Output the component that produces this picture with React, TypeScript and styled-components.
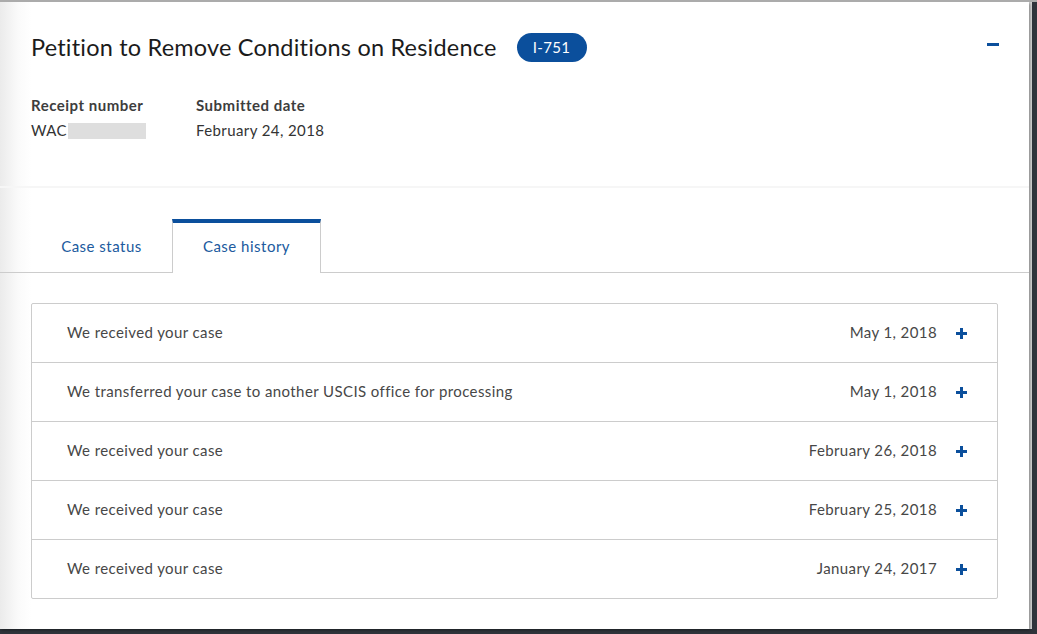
import React from 'react';
import styled, { createGlobalStyle } from 'styled-components';

const GlobalStyle = createGlobalStyle`
  html, body {
    margin: 0;
    padding: 0;
    background: #2f343b;
    font-family: 'Lato', 'Helvetica Neue', Arial, sans-serif;
  }
  * { box-sizing: border-box; }
`;

type HistoryItem = {
  text: string;
  date: string;
};

const history: HistoryItem[] = [
  { text: 'We received your case', date: 'May 1, 2018' },
  { text: 'We transferred your case to another USCIS office for processing', date: 'May 1, 2018' },
  { text: 'We received your case', date: 'February 26, 2018' },
  { text: 'We received your case', date: 'February 25, 2018' },
  { text: 'We received your case', date: 'January 24, 2017' },
];

export default function App() {
  return (
    <>
      <GlobalStyle />
      <Page>
        <Card>
          <Header>
            <TitleRow>
              <Title>Petition to Remove Conditions on Residence</Title>
              <FormBadge>I-751</FormBadge>
              <Collapse aria-label="collapse">
                <svg width="12" height="3" viewBox="0 0 12 3">
                  <rect width="12" height="3" fill="#0b4f9c" />
                </svg>
              </Collapse>
            </TitleRow>
            <Meta>
              <MetaItem>
                <MetaLabel>Receipt number</MetaLabel>
                <MetaValue>
                  WAC<Redacted />
                </MetaValue>
              </MetaItem>
              <MetaItem>
                <MetaLabel>Submitted date</MetaLabel>
                <MetaValue>February 24, 2018</MetaValue>
              </MetaItem>
            </Meta>
          </Header>

          <Tabs>
            <Tab>Case status</Tab>
            <Tab active>Case history</Tab>
          </Tabs>

          <Body>
            <Accordion>
              {history.map((item, i) => (
                <Row key={i}>
                  <RowText>{item.text}</RowText>
                  <RowDate>{item.date}</RowDate>
                  <Expand>
                    <svg width="11" height="11" viewBox="0 0 11 11">
                      <rect x="4" y="0" width="3" height="11" fill="#0b4f9c" />
                      <rect x="0" y="4" width="11" height="3" fill="#0b4f9c" />
                    </svg>
                  </Expand>
                </Row>
              ))}
            </Accordion>
          </Body>
        </Card>
      </Page>
    </>
  );
}

type TabProps = {
  active?: boolean;
};

const Page = styled.div`
  width: 1037px;
  height: 634px;
  border-top: 2px solid #ababab;
  overflow: hidden;
`;

const Card = styled.div`
  width: 1029px;
  height: 627px;
  background: linear-gradient(to right, #ebebeb 0, #fafafa 18px, #ffffff 32px);
  box-shadow: 1px 1px 3px rgba(0, 0, 0, 0.45), 3px 0 0 #d8d8d8;
  display: flex;
  flex-direction: column;
`;

const Header = styled.div`
  padding: 30px 31px 0 31px;
  height: 186px;
  border-bottom: 2px solid #f6f6f6;
`;

const TitleRow = styled.div`
  display: flex;
  align-items: center;
  height: 30px;
`;

const Title = styled.h1`
  margin: 0;
  font-size: 23.5px;
  font-weight: 400;
  color: #1b1b1b;
  letter-spacing: 0.2px;
`;

const FormBadge = styled.span`
  margin-left: 20px;
  width: 70px;
  height: 29px;
  border-radius: 15px;
  background: #0b4f9c;
  color: #ffffff;
  font-size: 15px;
  letter-spacing: 0.3px;
  display: flex;
  align-items: center;
  justify-content: center;
`;

const Collapse = styled.span`
  margin-left: auto;
  margin-right: -1px;
  margin-top: -5px;
  display: flex;
  align-items: center;
`;

const Meta = styled.div`
  display: flex;
  gap: 50px;
  margin-top: 34px;
`;

const MetaItem = styled.div`
  display: flex;
  flex-direction: column;
  gap: 7px;
`;

const MetaLabel = styled.div`
  font-size: 15px;
  font-weight: 700;
  letter-spacing: 0.5px;
  color: #3d3d3d;
`;

const MetaValue = styled.div`
  font-size: 15px;
  letter-spacing: 0.4px;
  color: #333333;
  display: flex;
  align-items: center;
`;

const Redacted = styled.span`
  display: inline-block;
  width: 78px;
  height: 16px;
  margin-left: 1px;
  margin-top: 2px;
  background: #dedede;
`;

const Tabs = styled.div`
  display: flex;
  align-items: flex-end;
  padding-left: 31px;
  margin-top: 31px;
  border-bottom: 1px solid #cccccc;
  height: 54px;
`;

const Tab = styled.div<TabProps>`
  height: ${(p) => (p.active ? '54px' : '50px')};
  width: ${(p) => (p.active ? '149px' : '141px')};
  margin-bottom: -1px;
  padding-bottom: 4px;
  display: flex;
  align-items: center;
  justify-content: center;
  font-size: 15px;
  letter-spacing: 0.5px;
  color: #205a9e;
  background: ${(p) => (p.active ? '#ffffff' : 'transparent')};
  border-top: ${(p) => (p.active ? '4px solid #0b4f9c' : 'none')};
  border-left: ${(p) => (p.active ? '1px solid #cccccc' : 'none')};
  border-right: ${(p) => (p.active ? '1px solid #cccccc' : 'none')};
`;

const Body = styled.div`
  padding: 30px 31px 0 31px;
`;

const Accordion = styled.div`
  border: 1px solid #cccccc;
  border-radius: 2px;
  background: #ffffff;
`;

const Row = styled.div`
  display: flex;
  align-items: center;
  height: 59px;
  padding: 0 30px 0 35px;
  border-bottom: 1px solid #cccccc;
  font-size: 15px;
  letter-spacing: 0.4px;
  color: #474747;

  &:last-child {
    border-bottom: none;
    height: 58px;
  }
`;

const RowText = styled.div`
  flex: 1;
  padding-bottom: 2px;
`;

const RowDate = styled.div`
  padding-bottom: 2px;
`;

const Expand = styled.span`
  margin-left: 19px;
  display: flex;
  align-items: center;
`;
